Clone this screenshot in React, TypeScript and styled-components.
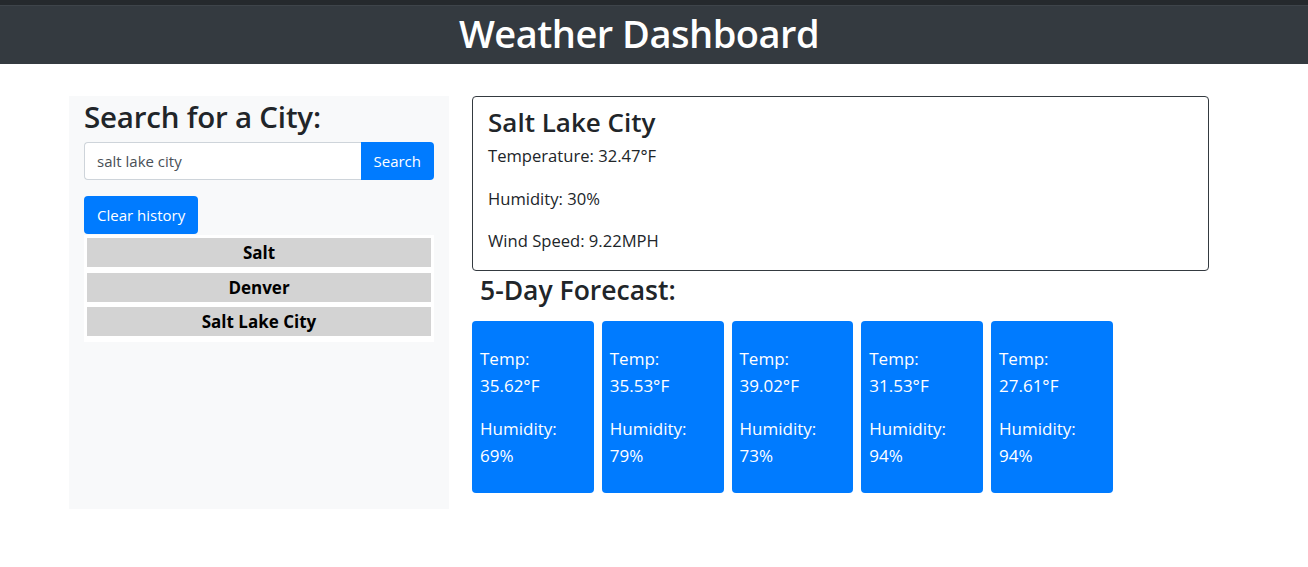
import React from "react";
import styled, { createGlobalStyle } from "styled-components";

const Global = createGlobalStyle`
  body { margin: 0; font-family: "Open Sans", "Noto Sans", sans-serif; color: #212529; background: #fff; }
  * { box-sizing: border-box; }
`;

const Header = styled.header`
  background: #343a40;
  border-top: 5px solid #25292d;
  box-shadow: inset 0 1px 0 #3e444a;
  height: 64px;
  display: flex;
  align-items: center;
  justify-content: center;
  padding: 0 30px 4px 0;
`;

const Title = styled.h1`
  margin: 0;
  color: #fff;
  font-size: 38px;
  font-weight: 600;
  letter-spacing: -0.5px;
`;

const Main = styled.main`
  display: flex;
  align-items: flex-start;
  padding: 32px 0 0 69px;
`;

const Sidebar = styled.aside`
  width: 380px;
  height: 413px;
  background: #f8f9fa;
  padding: 0 15px;
`;

const SideTitle = styled.h2`
  margin: 1px 0 5px;
  font-size: 29.5px;
  font-weight: 600;
  line-height: 40px;
  letter-spacing: -0.2px;
`;

const InputGroup = styled.div`
  display: flex;
  height: 38px;
`;

const Input = styled.input`
  flex: 1;
  border: 1px solid #ced4da;
  border-right: none;
  border-radius: 4px 0 0 4px;
  padding: 0 12px;
  font-family: inherit;
  font-size: 15px;
  color: #495057;
  background: #fff;
`;

const Button = styled.button<{ $joined?: boolean }>`
  background: #007bff;
  color: #fff;
  border: none;
  border-radius: ${(p) => (p.$joined ? "0 4px 4px 0" : "4px")};
  height: 38px;
  padding: 0 13px;
  font-family: inherit;
  font-size: 15px;
`;

const ClearRow = styled.div`
  margin-top: 16px;
`;

const HistoryList = styled.ul`
  list-style: none;
  margin: 1px 0 0;
  padding: 3px 3px 0.5px;
  background: #fff;
`;

const HistoryItem = styled.li`
  background: #d3d3d3;
  height: 29px;
  margin-bottom: 5.5px;
  display: flex;
  align-items: center;
  justify-content: center;
  font-weight: 700;
  font-size: 17px;
  color: #000;
`;

const Content = styled.section`
  margin-left: 23px;
  width: 737px;
`;

const CurrentCard = styled.div`
  border: 1px solid #343a40;
  border-radius: 4px;
  padding: 8px 15px 0;
  height: 175px;
`;

const CityName = styled.h3`
  margin: 0 0 4px;
  font-size: 26px;
  font-weight: 600;
  line-height: 34px;
`;

const Stat = styled.p`
  margin: 0 0 16px;
  font-size: 16.6px;
  line-height: 26.5px;
`;

const ForecastTitle = styled.h3`
  margin: 2px 0 14px 8px;
  font-size: 26.5px;
  font-weight: 600;
  line-height: 34px;
`;

const ForecastRow = styled.div`
  display: flex;
  gap: 8px;
`;

const DayCard = styled.div`
  width: 121.75px;
  height: 172px;
  background: #007bff;
  color: #fff;
  border-radius: 4px;
  padding: 24px 8px 0;
`;

const DayText = styled.p`
  margin: 0 0 16px;
  font-size: 17px;
  line-height: 27px;
`;

const history = ["Salt", "Denver", "Salt Lake City"];
const forecast = [
  { t: "35.62", h: "69" },
  { t: "35.53", h: "79" },
  { t: "39.02", h: "73" },
  { t: "31.53", h: "94" },
  { t: "27.61", h: "94" },
];

export default function App() {
  return (
    <>
      <Global />
      <Header>
        <Title>Weather Dashboard</Title>
      </Header>
      <Main>
        <Sidebar>
          <SideTitle>Search for a City:</SideTitle>
          <InputGroup>
            <Input defaultValue="salt lake city" />
            <Button $joined>Search</Button>
          </InputGroup>
          <ClearRow>
            <Button>Clear history</Button>
          </ClearRow>
          <HistoryList>
            {history.map((c) => (
              <HistoryItem key={c}>{c}</HistoryItem>
            ))}
          </HistoryList>
        </Sidebar>
        <Content>
          <CurrentCard>
            <CityName>Salt Lake City</CityName>
            <Stat>Temperature: 32.47°F</Stat>
            <Stat>Humidity: 30%</Stat>
            <Stat>Wind Speed: 9.22MPH</Stat>
          </CurrentCard>
          <ForecastTitle>5-Day Forecast:</ForecastTitle>
          <ForecastRow>
            {forecast.map((d, i) => (
              <DayCard key={i}>
                <DayText>
                  Temp:
                  <br />
                  {d.t}°F
                </DayText>
                <DayText>
                  Humidity:
                  <br />
                  {d.h}%
                </DayText>
              </DayCard>
            ))}
          </ForecastRow>
        </Content>
      </Main>
    </>
  );
}
